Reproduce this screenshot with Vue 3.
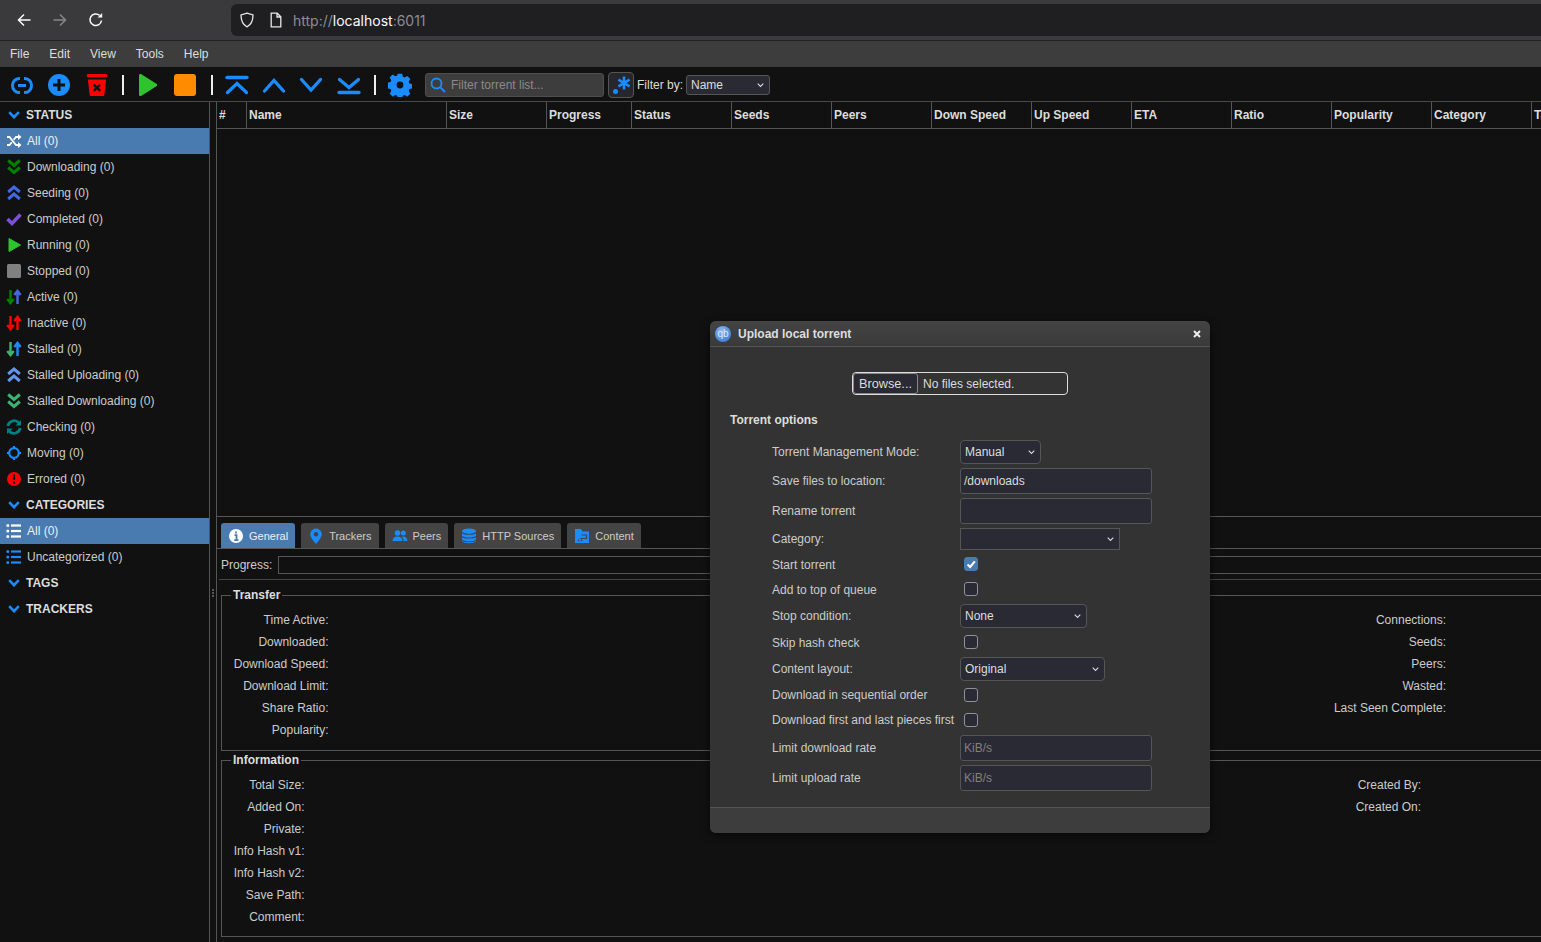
<template>
  <div class="page">
    <!-- browser chrome -->
    <div class="chrome">
      <svg class="nav nav-back" viewBox="0 0 16 16"><path d="M14.500 8H2.500M8 2.500 2.500 8 8 13.500" /></svg>
      <svg class="nav nav-fwd" viewBox="0 0 16 16"><path d="M1.500 8h12M8 2.500 13.500 8 8 13.500" /></svg>
      <svg class="nav nav-reload" viewBox="0 0 16 16"><path d="M13.500 8.500A5.800 5.800 0 1 1 11.600 3.400" /><path class="solid" d="M9.600 5.600h4.600V1z" /></svg>
      <div class="urlbar">
        <svg class="url-ico" viewBox="0 0 16 16"><path d="M8 1.200 14 3c0 6-1.600 9.600-6 11.800C3.600 12.600 2 9 2 3z" /></svg>
        <svg class="url-ico page-ico" viewBox="0 0 16 16"><path d="M3.200 1.200h6l3.600 3.600v10h-9.600zM9 1.500V5h3.600" /></svg>
        <span class="url"><span class="dim">http://</span>localhost<span class="dim">:6011</span></span>
      </div>
    </div>

    <!-- app menu -->
    <div class="menubar">
      <span v-for="m in menus" :key="m" class="menu-item">{{ m }}</span>
    </div>

    <!-- toolbar -->
    <div class="toolbar">
      <svg class="tb tb-link" viewBox="0 0 24 24"><path d="M10 5.500H9a6.500 7 0 0 0 0 14h1M14 5.500h1a6.500 7 0 0 1 0 14h-1M8 12.500h8" /></svg>
      <svg class="tb tb-add" viewBox="0 0 24 24"><circle cx="12" cy="12" r="11" fill="#1a8cff" /><path d="M12 6v12M6 12h12" stroke="#111" stroke-width="3" /></svg>
      <svg class="tb tb-del" viewBox="0 0 24 24"><rect x="1" y="0" width="22" height="3.500" rx="1" fill="#f00" /><path d="M2 6h20l-2 17a1 1 0 0 1-1 1H5a1 1 0 0 1-1-1z" fill="#f00" /><path d="m8.500 11.500 7 7M15.500 11.500l-7 7" stroke="#111" stroke-width="2.600" /></svg>
      <span class="sep sep-1"></span>
      <svg class="tb tb-play" viewBox="0 0 24 24"><path d="M4 2.500c0-1.500 1.200-2 2.400-1.300l15 9.600c1 .6 1 1.800 0 2.400l-15 9.600C5.200 23.500 4 23 4 21.500z" fill="#2dc42d" /></svg>
      <svg class="tb tb-stop" viewBox="0 0 24 24"><rect x="1" y="1" width="22" height="22" rx="3" fill="#ff8c00" /></svg>
      <span class="sep"></span>
      <svg class="tb tb-top" viewBox="0 0 24 24"><path class="bl" d="M2 4.500h20" stroke-width="2" /><path class="bl" d="M2.500 19.500 12 10.500l9.500 9" /></svg>
      <svg class="tb tb-up" viewBox="0 0 24 24"><path class="bl" d="M2.500 18 12 7.500 21.500 18" /></svg>
      <svg class="tb tb-down" viewBox="0 0 24 24"><path class="bl" d="M2.500 6.500 12 17l9.500-10.500" /></svg>
      <svg class="tb tb-bottom" viewBox="0 0 24 24"><path class="bl" d="M2.500 6.500 12 14.500l9.500-8" /><path class="bl" d="M2 19.500h20" stroke-width="2" /></svg>
      <span class="sep sep-3"></span>
      <svg class="tb tb-gear" viewBox="0 0 24 24"><path fill="#1a8cff" fill-rule="evenodd" d="M9.800 0.800h4.400l.6 3 1.900.8 2.600-1.700 3.100 3.100-1.700 2.600.8 1.900 3 .6v4.400l-3 .6-.8 1.900 1.700 2.600-3.100 3.100-2.600-1.700-1.900.8-.6 3H9.800l-.6-3-1.900-.8-2.600 1.700-3.100-3.100 1.700-2.600-.8-1.900-3-.6V9.700l3-.6.8-1.900-1.700-2.600 3.100-3.100 2.600 1.700 1.900-.8zM12 8.600a3.400 3.400 0 1 0 0 6.800 3.400 3.400 0 0 0 0-6.800z" /></svg>
      <div class="search">
        <svg class="search-ico" viewBox="0 0 16 16"><circle cx="6.500" cy="6.500" r="5" /><path d="m10.500 10.500 4.500 4.500" /></svg>
        <span>Filter torrent list...</span>
      </div>
      <div class="regex">
        <span class="regex-dot"></span>
        <svg viewBox="0 0 12 12"><path d="M6 .5v11M1.200 3.200l9.600 5.600M10.800 3.200 1.200 8.800" /></svg>
      </div>
      <span class="filter-label">Filter by:</span>
      <div class="select filter-select">Name<svg class="caret" viewBox="0 0 10 6"><path d="m1 1 4 4 4-4" /></svg></div>
    </div>

    <div class="main">
      <!-- sidebar -->
      <aside class="sidebar">
        <template v-for="row in sideRows" :key="row.key">
          <div v-if="row.head" class="side-head">
            <svg class="side-chev" viewBox="0 0 12 8"><path d="M1.200 1.200 6 6.200l4.800-5" /></svg>{{ row.head }}
          </div>
          <div v-else class="side-row" :class="{ selected: row.selected }">
            <svg class="side-ico" viewBox="0 0 16 16" v-html="row.icon"></svg>{{ row.label }}
          </div>
        </template>
      </aside>
      <div class="splitter"><span class="grip"></span></div>

      <!-- right side -->
      <section class="content">
        <div class="thead">
          <div v-for="c in columns" :key="c.name" class="th" :style="{ width: c.w + 'px' }">{{ c.name }}</div>
        </div>
        <div class="list-area"></div>

        <div class="details">
          <div class="tabs">
            <div v-for="t in tabs" :key="t.name" class="tab" :class="{ active: t.active }">
              <svg class="tab-ico" viewBox="0 0 16 16" v-html="t.icon"></svg>{{ t.name }}
            </div>
          </div>
          <div class="progress-row">
            <span>Progress:</span>
            <div class="progress-box"></div>
          </div>
          <fieldset class="group transfer">
            <legend>Transfer</legend>
            <div class="col col-left">
              <div v-for="l in transferLeft" :key="l">{{ l }}</div>
            </div>
            <div class="col col-right">
              <div v-for="l in transferRight" :key="l">{{ l }}</div>
            </div>
          </fieldset>
          <fieldset class="group info">
            <legend>Information</legend>
            <div class="col col-left2">
              <div v-for="l in infoLeft" :key="l">{{ l }}</div>
            </div>
            <div class="col col-right2">
              <div v-for="l in infoRight" :key="l">{{ l }}</div>
            </div>
          </fieldset>
        </div>
      </section>
    </div>

    <!-- upload dialog -->
    <div class="dialog">
      <div class="dlg-title">
        <span class="dlg-logo">qb</span>
        <span class="dlg-name">Upload local torrent</span>
        <svg class="dlg-close" viewBox="0 0 8 8"><path d="m1 1 6 6M7 1 1 7" /></svg>
      </div>
      <div class="dlg-body">
        <div class="file-wrap">
          <div class="file">
            <span class="browse">Browse...</span>
            <span class="nofile">No files selected.</span>
          </div>
        </div>
        <div class="opts-title">Torrent options</div>
        <div class="form">
          <div v-for="f in fields" :key="f.label" class="f-row" :style="{ height: f.h + 'px' }">
            <span class="f-label">{{ f.label }}</span>
            <span v-if="f.type === 'check'" class="check" :class="{ on: f.on, lift: f.h === 25 }">
              <svg v-if="f.on" viewBox="0 0 14 14"><path d="m3 7.500 3 3 5.500-6.500" /></svg>
            </span>
            <div v-else-if="f.type === 'select'" class="select f-select" :class="{ square: f.square }" :style="{ width: f.w + 'px', height: f.ch + 'px' }">
              {{ f.value }}<svg class="caret" viewBox="0 0 10 6"><path d="m1 1 4 4 4-4" /></svg>
            </div>
            <div v-else class="text-input" :class="{ ph: f.ph }">{{ f.value || f.ph }}</div>
          </div>
        </div>
      </div>
      <div class="dlg-foot"></div>
    </div>
  </div>
</template>

<script setup>
const menus = ['File', 'Edit', 'View', 'Tools', 'Help']

const arrows = (down, up) =>
  `<path d="M4.500 1v13M1.300 10 4.500 14l3.200-4" fill="none" stroke="${down}" stroke-width="2.400"/><path d="M11.500 15V2M8.300 6 11.500 2l3.200 4" fill="none" stroke="${up}" stroke-width="2.400"/>`
const chevDown = (c) =>
  `<path d="M2.200 1.500 8 6.500l5.800-5M2.200 8.500 8 13.500l5.800-5" fill="none" stroke="${c}" stroke-width="3"/>`
const chevUp = (c) =>
  `<path d="M2.200 7 8 2l5.800 5M2.200 14 8 9l5.800 5" fill="none" stroke="${c}" stroke-width="3"/>`
const listIcon = (c) =>
  `<g fill="${c}"><circle cx="1.800" cy="2.500" r="1.500"/><circle cx="1.800" cy="8" r="1.500"/><circle cx="1.800" cy="13.500" r="1.500"/><rect x="5" y="1.400" width="10" height="2.200"/><rect x="5" y="6.900" width="10" height="2.200"/><rect x="5" y="12.400" width="10" height="2.200"/></g>`

const statusRows = [
  ['All (0)', '<path d="M1 4h2.500l6.500 8h2.500M1 12h2.500l2.300-2.800M7.700 6.800 10 4h2.500" fill="none" stroke="#fff" stroke-width="1.800"/><path d="M12 1l3.500 3L12 7zM12 9l3.500 3-3.500 3z" fill="#fff"/>', true],
  ['Downloading (0)', chevDown('#008000')],
  ['Seeding (0)', chevUp('#4169e1')],
  ['Completed (0)', '<path d="M1.500 8 6 12.500 14.500 3.500" fill="none" stroke="#7b4fd6" stroke-width="3.600"/>'],
  ['Running (0)', '<path d="M3 1.500 14.500 8 3 14.500z" fill="#2dc42d" stroke="#2dc42d" stroke-linejoin="round"/>'],
  ['Stopped (0)', '<rect x="1" y="1" width="14" height="14" rx="1.500" fill="#808080"/>'],
  ['Active (0)', arrows('#008000', '#4169e1')],
  ['Inactive (0)', arrows('#f00', '#f00')],
  ['Stalled (0)', arrows('#3cb371', '#1a8cff')],
  ['Stalled Uploading (0)', chevUp('#6495ed')],
  ['Stalled Downloading (0)', chevDown('#3cb371')],
  ['Checking (0)', '<path d="M1.800 7A6.400 6.400 0 0 1 12.800 3.800M14.200 9A6.400 6.400 0 0 1 3.200 12.200" fill="none" stroke="#008080" stroke-width="2.800"/><path d="M15 1v5.500H9.500zM1 15V9.500h5.500z" fill="#008080"/>'],
  ['Moving (0)', '<circle cx="8" cy="8" r="4.800" fill="none" stroke="#1a8cff" stroke-width="2.200"/><path d="M8 1v3M8 12v3M1 8h3M12 8h3" stroke="#1a8cff" stroke-width="2"/>'],
  ['Errored (0)', '<circle cx="8" cy="8" r="7" fill="#f00"/><path d="M8 3.500v5.500M8 10.500v2.200" stroke="#111" stroke-width="2.200"/>'],
]

const sideRows = [
  { key: 'h1', head: 'STATUS' },
  ...statusRows.map(([label, icon, selected]) => ({ key: 's-' + label, label, icon, selected })),
  { key: 'h2', head: 'CATEGORIES' },
  { key: 'c1', label: 'All (0)', icon: listIcon('#fff'), selected: true },
  { key: 'c2', label: 'Uncategorized (0)', icon: listIcon('#1a8cff') },
  { key: 'h3', head: 'TAGS' },
  { key: 'h4', head: 'TRACKERS' },
]

const columns = [
  { name: '#', w: 30 },
  { name: 'Name', w: 200 },
  { name: 'Size', w: 100 },
  { name: 'Progress', w: 85 },
  { name: 'Status', w: 100 },
  { name: 'Seeds', w: 100 },
  { name: 'Peers', w: 100 },
  { name: 'Down Speed', w: 100 },
  { name: 'Up Speed', w: 100 },
  { name: 'ETA', w: 100 },
  { name: 'Ratio', w: 100 },
  { name: 'Popularity', w: 100 },
  { name: 'Category', w: 100 },
  { name: 'Tags', w: 100 },
]

const tabs = [
  { name: 'General', active: true, icon: '<circle cx="8" cy="8" r="7" fill="#fff"/><path d="M8 3.500v2M6.500 7.200H8.500V12M6.300 12.200h4.200" fill="none" stroke="#4a7bb0" stroke-width="1.800"/>' },
  { name: 'Trackers', icon: '<path fill-rule="evenodd" d="M8 .5a5.800 5.800 0 0 1 5.800 5.800c0 3.700-5.800 9.700-5.800 9.700S2.200 10 2.200 6.300A5.800 5.800 0 0 1 8 .5zm0 3.500a2.300 2.300 0 1 0 0 4.600 2.300 2.300 0 0 0 0-4.600z" fill="#1a8cff"/>' },
  { name: 'Peers', icon: '<g fill="#1a8cff"><circle cx="5.500" cy="5" r="2.800"/><circle cx="11.300" cy="5" r="2.500"/><path d="M.5 13c0-3 2-4.600 5-4.600s5 1.600 5 4.600zM11.600 13c0-1.700-.5-3.200-1.800-4.300 3-.8 5.700.8 5.700 4.300z"/></g>' },
  { name: 'HTTP Sources', icon: '<g fill="#1a8cff"><ellipse cx="8" cy="3.200" rx="7" ry="2.700"/><path d="M1 5.200c1.500 2 12.500 2 14 0v2.500c-1 2.400-13 2.400-14 0zM1 9c1.500 2 12.500 2 14 0v2.500c-1 2.400-13 2.400-14 0zM1 12.800c1.500 2 12.500 2 14 0v.5c-1 2.600-13 2.600-14 0z"/></g>' },
  { name: 'Content', icon: '<path d="M1 1h6l1.600 2.500H15V15H1z" fill="#1a8cff"/><path d="M7.500 7h5v3.500H6" fill="none" stroke="#444" stroke-width="1.200"/><circle cx="4.500" cy="12.300" r=".9" fill="#444"/><circle cx="7.500" cy="12.300" r=".9" fill="#444"/>' },
]

const transferLeft = ['Time Active:', 'Downloaded:', 'Download Speed:', 'Download Limit:', 'Share Ratio:', 'Popularity:']
const transferRight = ['Connections:', 'Seeds:', 'Peers:', 'Wasted:', 'Last Seen Complete:']
const infoLeft = ['Total Size:', 'Added On:', 'Private:', 'Info Hash v1:', 'Info Hash v2:', 'Save Path:', 'Comment:']
const infoRight = ['Created By:', 'Created On:']

const fields = [
  { label: 'Torrent Management Mode:', type: 'select', value: 'Manual', w: 81, ch: 24, h: 28 },
  { label: 'Save files to location:', type: 'text', value: '/downloads', h: 30 },
  { label: 'Rename torrent', type: 'text', h: 30 },
  { label: 'Category:', type: 'select', value: '', w: 160, ch: 22, h: 26, square: true },
  { label: 'Start torrent', type: 'check', on: true, h: 25 },
  { label: 'Add to top of queue', type: 'check', h: 25 },
  { label: 'Stop condition:', type: 'select', value: 'None', w: 127, ch: 24, h: 28 },
  { label: 'Skip hash check', type: 'check', h: 25 },
  { label: 'Content layout:', type: 'select', value: 'Original', w: 145, ch: 24, h: 28 },
  { label: 'Download in sequential order', type: 'check', h: 24 },
  { label: 'Download first and last pieces first', type: 'check', h: 26 },
  { label: 'Limit download rate', type: 'text', ph: 'KiB/s', h: 30 },
  { label: 'Limit upload rate', type: 'text', ph: 'KiB/s', h: 30 },
]
</script>

<style>
html, body {
  margin: 0;
  background: #111;
  overflow: hidden;
}
</style>

<style scoped>
.page {
  position: relative;
  width: 1541px;
  height: 942px;
  overflow: hidden;
  display: flex;
  flex-direction: column;
  background: #111;
  color: #ccc;
  font: 12px "Liberation Sans", Arial, sans-serif;
}

/* browser bar */
.chrome {
  height: 40px;
  flex: none;
  display: flex;
  align-items: center;
  background: #3a3a3c;
  border-bottom: 1px solid #222;
}
.nav {
  width: 16px;
  height: 16px;
  fill: none;
  stroke: #fbfbfe;
  stroke-width: 1.500;
  margin-left: 20px;
}
.nav-back { margin-left: 16px; }
.nav-fwd { stroke: #86868a; }
.nav .solid { fill: #fbfbfe; stroke: none; }
.urlbar {
  margin-left: 127px;
  flex: 1;
  height: 32px;
  display: flex;
  align-items: center;
  background: #1f1f21;
  border-radius: 6px 0 0 6px;
  padding-left: 8px;
}
.url-ico {
  width: 16px;
  height: 16px;
  fill: none;
  stroke: #e8e8ea;
  stroke-width: 1.300;
}
.page-ico { margin-left: 13px; }
.url {
  margin-left: 9px;
  font: 14px Inter, "Noto Sans", sans-serif;
  color: #fbfbfe;
}
.dim { color: #8d8d91; }

.menubar {
  height: 26px;
  flex: none;
  display: flex;
  align-items: center;
  background: #3d3d3d;
}
.menu-item {
  padding: 0 10px;
  color: #ddd;
}

/* toolbar */
.toolbar {
  height: 35px;
  flex: none;
  display: flex;
  align-items: center;
  background: #111;
  border-bottom: 1px solid #4a4a4a;
  box-sizing: border-box;
  padding-top: 1px;
}
.tb {
  width: 24px;
  height: 24px;
  flex: none;
}
.tb-link { margin-left: 10px; fill: none; stroke: #1a8cff; stroke-width: 3; }
.tb-add { margin-left: 13px; }
.tb-del { margin-left: 14px; height: 22px; }
.tb-play { margin-left: 11px; }
.tb-stop { margin-left: 14px; }
.tb-top { margin-left: 12px; }
.tb-up, .tb-down { margin-left: 13px; }
.tb-bottom { margin-left: 14px; }
.tb-gear { margin-left: 12px; }
.bl { fill: none; stroke: #1a8cff; stroke-width: 3.300; stroke-linecap: round; }
.sep {
  width: 2px;
  height: 20px;
  flex: none;
  margin-left: 14px;
  background: #eee;
}
.sep-1, .sep-3 { margin-left: 13px; }
.search {
  margin-left: 13px;
  width: 179px;
  height: 24px;
  box-sizing: border-box;
  display: flex;
  align-items: center;
  gap: 5px;
  padding-left: 4px;
  background: #3d3d3d;
  border: 1px solid #4f4f4f;
  border-radius: 3px;
  color: #8a8a8a;
}
.search-ico {
  width: 16px;
  height: 16px;
  fill: none;
  stroke: #1a8cff;
  stroke-width: 1.800;
}
.regex {
  position: relative;
  margin-left: 4px;
  width: 26px;
  height: 26px;
  box-sizing: border-box;
  background: #26262c;
  border: 1px solid #555;
  border-radius: 4px;
}
.regex svg {
  position: absolute;
  top: 3px;
  right: 2px;
  width: 14px;
  height: 14px;
  fill: none;
  stroke: #1a8cff;
  stroke-width: 2.200;
}
.regex-dot {
  position: absolute;
  left: 4px;
  bottom: 3px;
  width: 5px;
  height: 5px;
  border-radius: 50%;
  background: #1a8cff;
}
.filter-label {
  margin-left: 3px;
  color: #ddd;
}
.select {
  position: relative;
  box-sizing: border-box;
  display: flex;
  align-items: center;
  padding-left: 4px;
  background: #2a2a34;
  border: 1px solid #555;
  border-radius: 3px;
  color: #ddd;
}
.filter-select {
  margin-left: 3px;
  width: 84px;
  height: 20px;
}
.caret {
  position: absolute;
  right: 5px;
  top: 50%;
  margin-top: -3px;
  width: 7px;
  height: 6px;
  fill: none;
  stroke: #ddd;
  stroke-width: 1.500;
}

.main {
  flex: 1;
  min-height: 0;
  display: flex;
}

/* sidebar */
.sidebar {
  width: 209px;
  flex: none;
  border-right: 1px solid #555;
}
.side-head,
.side-row {
  height: 26px;
  display: flex;
  align-items: center;
  white-space: nowrap;
}
.side-head {
  font-weight: bold;
  color: #ddd;
}
.side-chev {
  width: 12px;
  height: 8px;
  margin: 0 6px 0 8px;
  fill: none;
  stroke: #1a8cff;
  stroke-width: 2.600;
}
.side-ico {
  width: 16px;
  height: 16px;
  margin: 0 5px 0 6px;
  flex: none;
}
.side-row.selected {
  background: #4a7bb0;
  color: #eee;
}
.splitter {
  width: 7px;
  flex: none;
  box-sizing: border-box;
  display: flex;
  align-items: center;
  justify-content: center;
  border-right: 1px solid #555;
}
.grip {
  width: 2px;
  height: 8px;
  margin-top: 142px;
  background: repeating-linear-gradient(#555 0 2px, transparent 2px 3px);
}

/* table + details */
.content {
  flex: 1;
  min-width: 0;
  display: flex;
  flex-direction: column;
  overflow: hidden;
}
.thead {
  height: 27px;
  flex: none;
  display: flex;
  box-sizing: border-box;
  border-bottom: 1px solid #555;
}
.th {
  flex: none;
  box-sizing: border-box;
  padding-left: 2px;
  line-height: 26px;
  font-weight: bold;
  color: #ddd;
  border-right: 1px solid #555;
  white-space: nowrap;
  overflow: hidden;
}
.list-area {
  height: 387px;
  flex: none;
  border-bottom: 1px solid #555;
}
.details {
  flex: 1;
  min-height: 0;
}
.tabs {
  height: 32px;
  box-sizing: border-box;
  display: flex;
  align-items: flex-end;
  gap: 6px;
  padding-left: 4px;
  border-bottom: 1px solid #555;
}
.tab {
  height: 25px;
  box-sizing: border-box;
  display: flex;
  align-items: center;
  padding: 0 7px;
  gap: 5px;
  font-size: 11px;
  background: #444;
  border-radius: 3px 3px 0 0;
  color: #ccc;
}
.tab.active {
  background: #4a7bb0;
  color: #eee;
}
.tab-ico {
  width: 16px;
  height: 16px;
  flex: none;
}
.progress-row {
  height: 31px;
  box-sizing: border-box;
  display: flex;
  align-items: center;
  gap: 6px;
  margin: 0 -2px 0 2px;
  padding: 1px 0 0 2px;
  border-bottom: 1px solid #444;
}
.progress-box {
  flex: 1;
  height: 18px;
  box-sizing: border-box;
  border: 1px solid #555;
}
.group {
  position: relative;
  margin: 8px -2px 0 4px;
  padding: 0;
  border: 1px solid #555;
  min-width: 0;
}
.group legend {
  margin-left: 9px;
  padding: 0 2px;
  font-weight: bold;
  color: #ddd;
}
.transfer { height: 161px; }
.info { height: 182px; margin-top: 2px; }
.col {
  position: absolute;
  text-align: right;
  line-height: 22px;
}
.col-left { left: 0; width: 106.500px; top: 7px; }
.col-right { left: 1048px; width: 176px; top: 7px; }
.col-left2 { left: 0; width: 82.500px; top: 7px; }
.col-right2 { left: 1048px; width: 151px; top: 7px; }

/* dialog */
.dialog {
  position: absolute;
  left: 710px;
  top: 321px;
  width: 500px;
  height: 512px;
  display: flex;
  flex-direction: column;
  background: #333;
  border-radius: 6px;
  box-shadow: 0 2px 8px rgba(0, 0, 0, .6);
  overflow: hidden;
}
.dlg-title {
  height: 26px;
  flex: none;
  box-sizing: border-box;
  display: flex;
  align-items: center;
  background: linear-gradient(#444, #3a3a3a);
  border-bottom: 1px solid #555;
}
.dlg-logo {
  width: 16px;
  height: 16px;
  margin-left: 5px;
  border-radius: 50%;
  background: radial-gradient(circle at 40% 30%, #8ab8f0, #2f6fd0);
  color: #dfeaff;
  font-size: 10px;
  line-height: 15px;
  text-align: center;
}
.dlg-name {
  margin-left: 7px;
  font-weight: bold;
  color: #ddd;
}
.dlg-close {
  margin-left: auto;
  margin-right: 9px;
  width: 8px;
  height: 8px;
  fill: none;
  stroke: #eee;
  stroke-width: 2;
}
.dlg-body {
  flex: 1;
  padding: 25px 0 0 20px;
}
.file-wrap {
  padding-left: 122px;
}
.file {
  width: 216px;
  height: 23px;
  box-sizing: border-box;
  display: flex;
  align-items: center;
  border: 1px solid #ddd;
  border-radius: 4px;
  color: #ddd;
}
.browse {
  width: 65px;
  height: 21px;
  box-sizing: border-box;
  line-height: 21px;
  font-size: 12.700px;
  text-align: center;
  background: #2a2a34;
  border: 1px solid #888;
  border-radius: 3px;
}
.nofile { margin-left: 5px; }
.opts-title {
  margin-top: 17px;
  font-weight: bold;
  color: #ddd;
  line-height: 16px;
}
.form {
  margin-top: 10px;
  padding-left: 42px;
}
.f-row {
  display: flex;
  align-items: center;
}
.f-label {
  width: 188px;
  flex: none;
  white-space: nowrap;
}
.f-select {
  padding-left: 4px;
  border-radius: 4px;
}
.f-select.square { border-radius: 0; }
.text-input {
  width: 192px;
  height: 26px;
  box-sizing: border-box;
  padding-left: 3px;
  line-height: 24px;
  background: #2a2a34;
  border: 1px solid #555;
  border-radius: 3px;
  color: #ddd;
}
.text-input.ph { color: #808080; }
.check {
  width: 14px;
  height: 14px;
  margin-left: 4px;
  box-sizing: border-box;
  background: #2a2a34;
  border: 1px solid #8f8f9d;
  border-radius: 3px;
}
.check.lift { margin-bottom: 1px; }
.check.on {
  background: #4a7bb0;
  border-color: #4a7bb0;
}
.check svg {
  display: block;
  width: 12px;
  height: 12px;
  fill: none;
  stroke: #fff;
  stroke-width: 2.400;
}
.dlg-foot {
  height: 25px;
  flex: none;
  background: #3d3d3d;
  border-top: 1px solid #555;
}
</style>
